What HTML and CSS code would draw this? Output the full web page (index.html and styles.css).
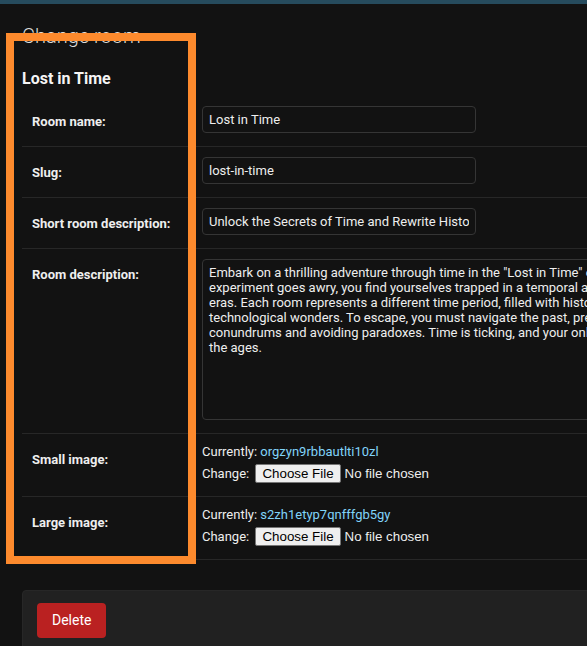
FILE: index.html
```html
<!DOCTYPE html>
<html lang="en">
<head>
<meta charset="utf-8">
<title>Change room</title>
<link rel="stylesheet" href="styles.css">
</head>
<body>
<div class="topbar"></div>
<main class="content">
  <div class="content-inner">
    <h1 class="page-title">Change room</h1>
    <h2 class="object-title">Lost in Time</h2>
    <form class="room-form">
      <fieldset class="module aligned">
        <div class="form-row">
          <label class="field-label" for="id_name">Room name:</label>
          <input class="text-field" id="id_name" type="text" value="Lost in Time">
        </div>
        <div class="form-row">
          <label class="field-label" for="id_slug">Slug:</label>
          <input class="text-field" id="id_slug" type="text" value="lost-in-time">
        </div>
        <div class="form-row">
          <label class="field-label" for="id_short">Short room description:</label>
          <input class="text-field" id="id_short" type="text" value="Unlock the Secrets of Time and Rewrite History">
        </div>
        <div class="form-row">
          <label class="field-label" for="id_desc">Room description:</label>
          <textarea class="large-text" id="id_desc" wrap="off">Embark on a thrilling adventure through time in the "Lost in Time" escape room. When a time-travel
experiment goes awry, you find yourselves trapped in a temporal anomaly, jumping between different
eras. Each room represents a different time period, filled with historical puzzles, artifacts and
technological wonders. To escape, you must navigate the past, present and future, solving temporal
conundrums and avoiding paradoxes. Time is ticking, and your only hope is to find your way through
the ages.</textarea>
        </div>
        <div class="form-row">
          <label class="field-label" for="id_small">Small image:</label>
          <div class="file-upload">
            <div class="file-current">Currently: <a class="file-link" href="#">orgzyn9rbbautlti10zl</a></div>
            <div class="file-change">Change: <input class="file-input" id="id_small" type="file"></div>
          </div>
        </div>
        <div class="form-row">
          <label class="field-label" for="id_large">Large image:</label>
          <div class="file-upload">
            <div class="file-current">Currently: <a class="file-link" href="#">s2zh1etyp7qnfffgb5gy</a></div>
            <div class="file-change">Change: <input class="file-input" id="id_large" type="file"></div>
          </div>
        </div>
      </fieldset>
      <div class="submit-row">
        <a class="delete-link" href="#">Delete</a>
      </div>
    </form>
  </div>
</main>
<div class="highlight-box"></div>
</body>
</html>
```

FILE: styles.css
```css
html {
  overflow: hidden;
  background: #121212;
}
body {
  margin: 0;
  background: #121212;
  color: #eeeeee;
  font-family: Roboto, "Liberation Sans", Arial, sans-serif;
  font-size: 14px;
  line-height: 20px;
}
.topbar {
  height: 4px;
  background: #264b5d;
}
.content {
  display: block;
  overflow: hidden;
  padding: 20px 0 0 22px;
  height: 622px;
}
.content-inner {
  width: 880px;
}
.page-title {
  margin: 0 0 21px;
  font-size: 20px;
  line-height: 24px;
  font-weight: 300;
  color: #dcdcdc;
}
.object-title {
  margin: 0 0 7px;
  font-size: 16px;
  line-height: 20px;
  font-weight: 700;
  color: #f5f5f5;
}
.room-form {
  margin: 0;
}
.module {
  margin: 0 0 30px;
  padding: 0;
  border: 0;
  min-width: 0;
}
.form-row {
  display: flex;
  align-items: flex-start;
  padding: 10px;
  border-bottom: 1px solid #272727;
}
.field-label {
  flex: 0 0 160px;
  padding: 6px 10px 0 0;
  font-size: 13px;
  line-height: 20px;
  font-weight: 700;
  color: #eeeeee;
}
.text-field {
  display: block;
  box-sizing: border-box;
  width: 274px;
  height: 27px;
  margin: 0 0 3px;
  padding: 5px 6px;
  border: 1px solid #353535;
  border-radius: 4px;
  background: #121212;
  color: #eeeeee;
  font-family: Roboto, "Liberation Sans", Arial, sans-serif;
  font-size: 13px;
  line-height: normal;
  outline: none;
}
.large-text {
  display: block;
  box-sizing: border-box;
  width: 638px;
  height: 161px;
  margin: 0 0 3px;
  padding: 5px 6px;
  border: 1px solid #353535;
  border-radius: 4px;
  background: #121212;
  color: #eeeeee;
  font-family: Roboto, "Liberation Sans", Arial, sans-serif;
  font-size: 13px;
  line-height: normal;
  resize: none;
  overflow: hidden;
  outline: none;
}
.file-upload {
  font-size: 13px;
  color: #eeeeee;
}
.file-current {
  height: 16px;
  line-height: 16px;
}
.file-link {
  color: #81d4fa;
  text-decoration: none;
}
.file-change {
  display: flex;
  align-items: center;
  height: 26px;
  line-height: normal;
  white-space: pre;
}
.file-input {
  margin: 0;
  padding: 0 3px;
  border: 0;
  background: transparent;
  color: #eeeeee;
  font-family: "Liberation Sans", Arial, sans-serif;
  font-size: 13.33px;
}
.file-input::file-selector-button {
  margin: 0 4px 0 0;
  padding: 1px 6px;
  border: 1px solid #767676;
  border-radius: 2px;
  background: #efefef;
  color: #000000;
  font-family: "Liberation Sans", Arial, sans-serif;
  font-size: 13.33px;
}
.submit-row {
  display: flex;
  gap: 10px;
  padding: 12px 14px;
  background: #212121;
  border: 1px solid #272727;
  border-radius: 4px;
}
.delete-link {
  display: block;
  height: 15px;
  padding: 10px 15px;
  line-height: 15px;
  font-size: 14px;
  background: #ba2121;
  color: #ffffff;
  border-radius: 4px;
  text-decoration: none;
}
.highlight-box {
  position: absolute;
  left: 6px;
  top: 33px;
  width: 190px;
  height: 531px;
  box-sizing: border-box;
  border: 8px solid #fd8a2d;
  pointer-events: none;
}
```
